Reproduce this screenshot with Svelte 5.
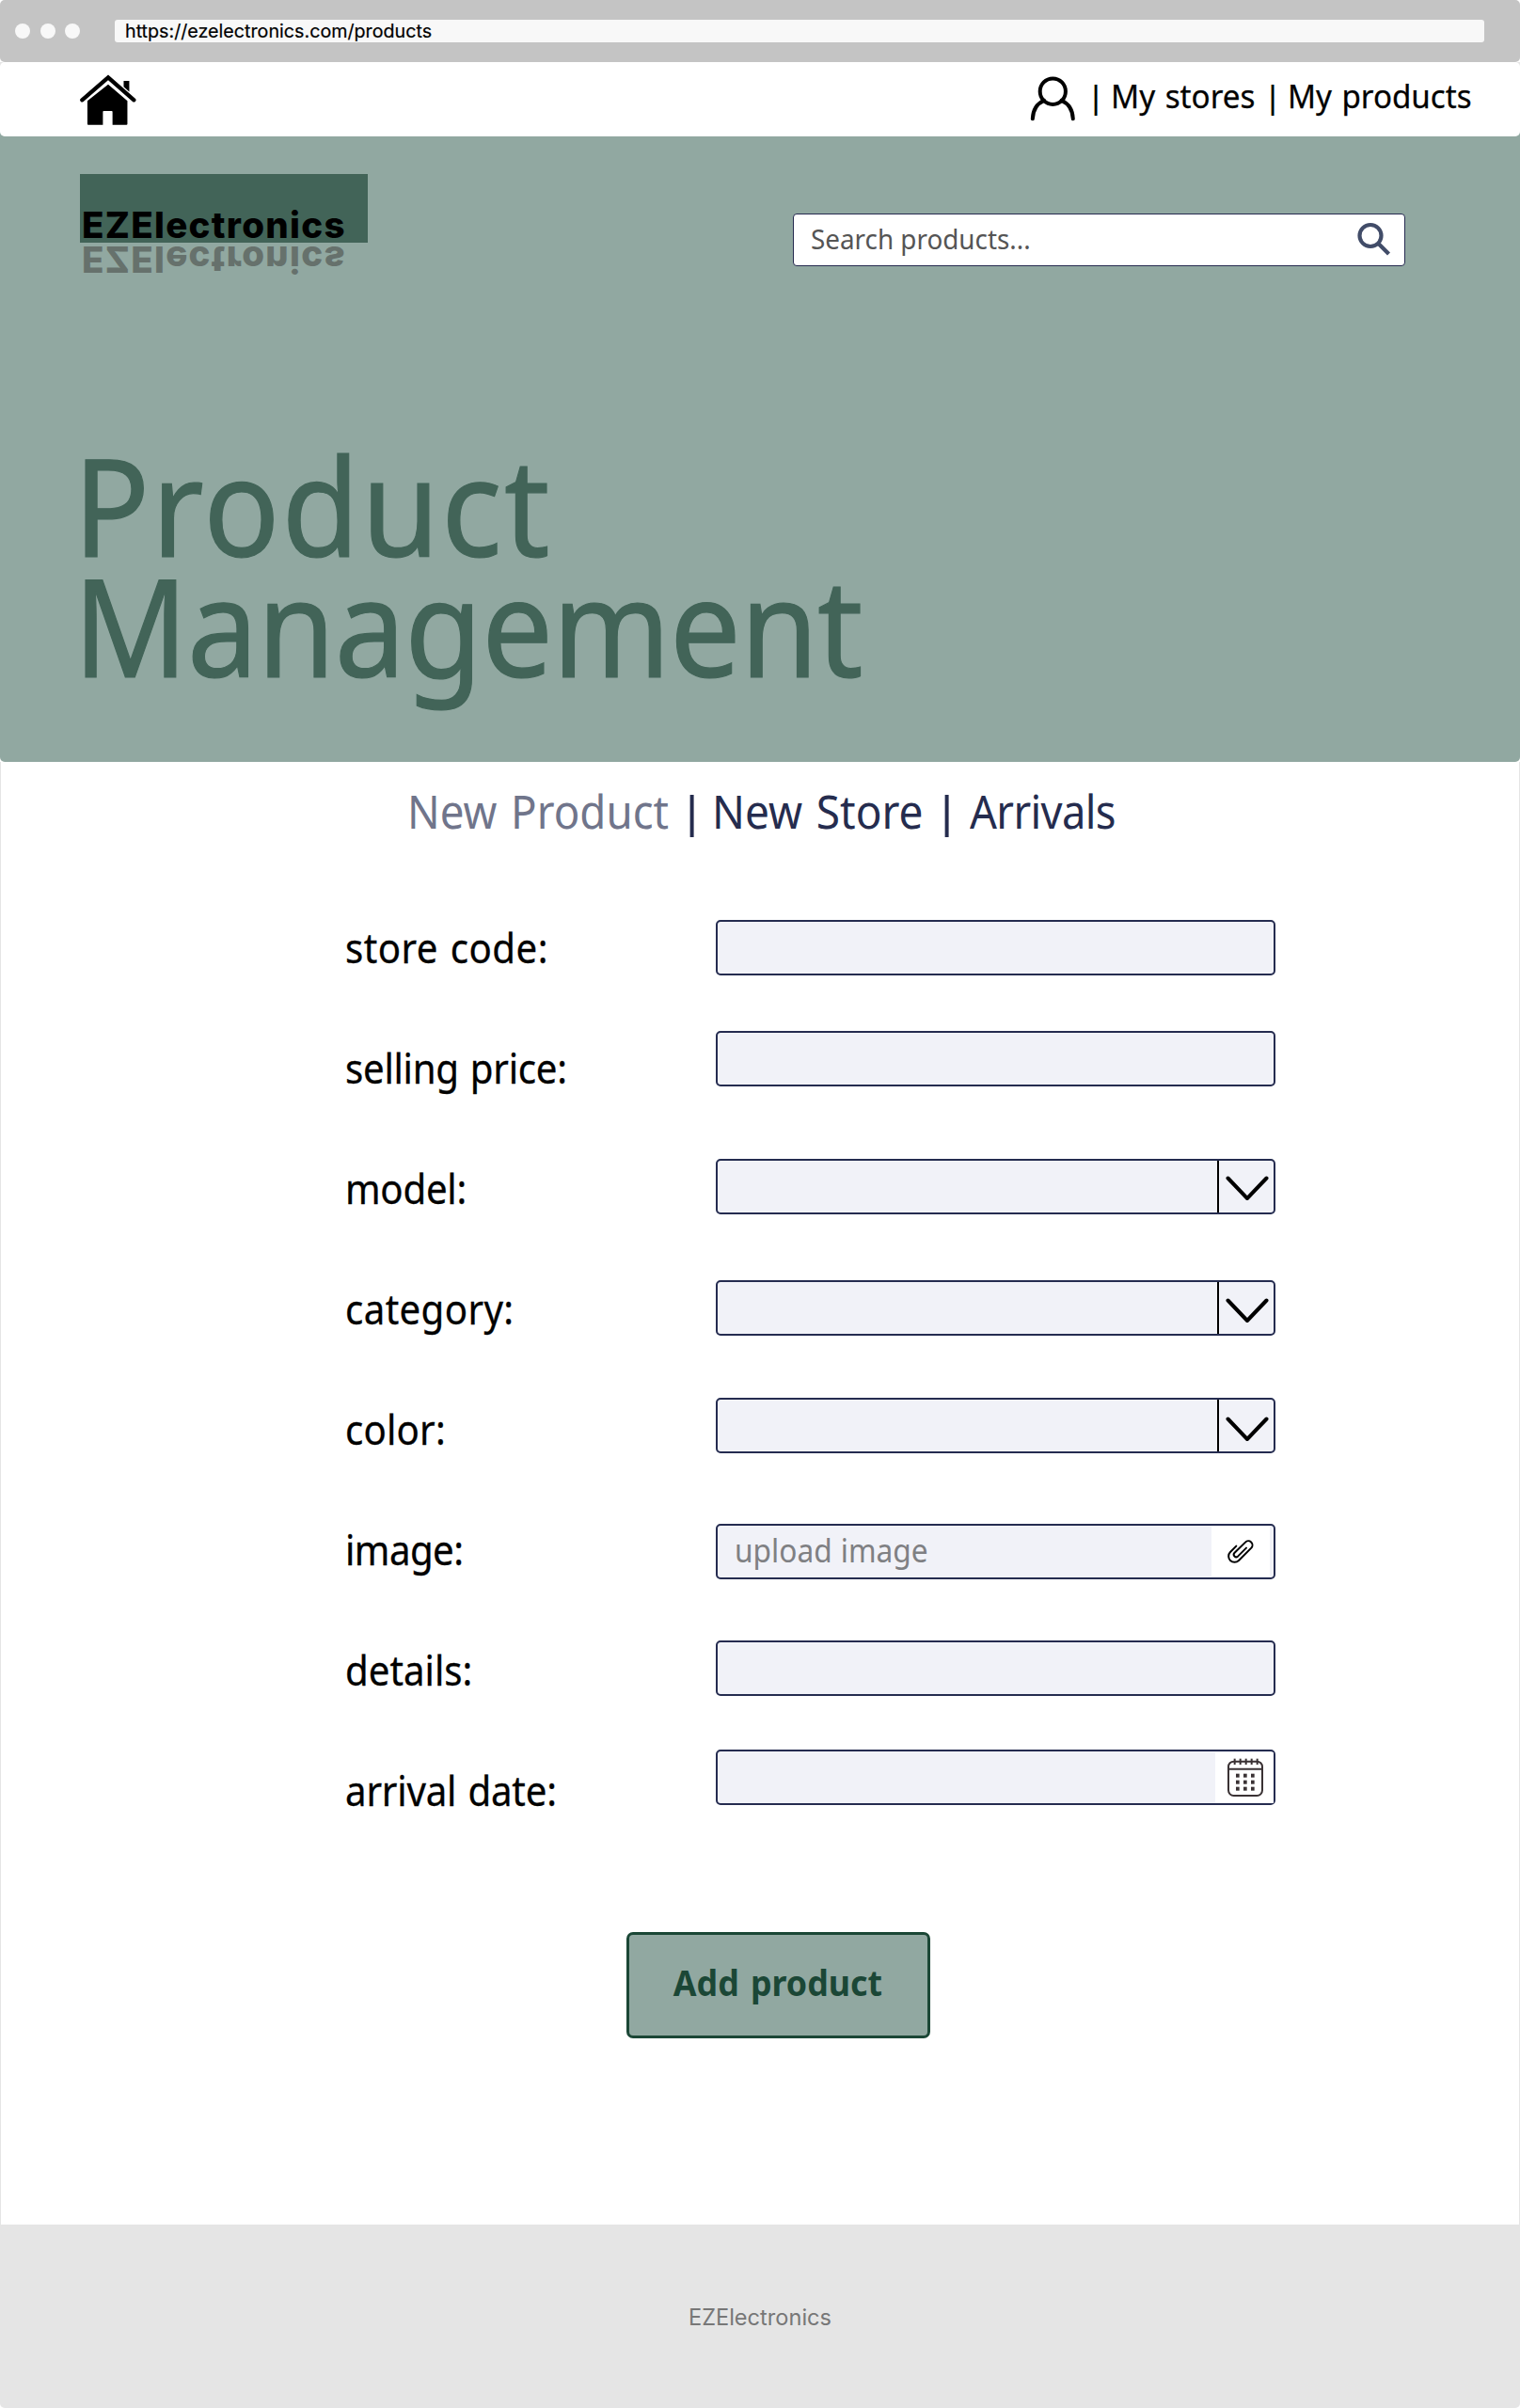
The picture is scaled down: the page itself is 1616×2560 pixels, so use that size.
<script>
  const fields = [
    { label: 'store code:', track: 0.5, kind: 'text' },
    { label: 'selling price:', track: -0.3, kind: 'text' },
    { label: 'model:', track: -0.3, kind: 'select' },
    { label: 'category:', track: 0.4, kind: 'select' },
    { label: 'color:', track: 0.2, kind: 'select' },
    { label: 'image:', track: -0.6, kind: 'file' },
    { label: 'details:', track: 0, kind: 'text' },
    { label: 'arrival date:', track: -0.2, kind: 'date' },
  ];
</script>

<div class="page">
  <div class="browser">
    <i class="dot"></i><i class="dot"></i><i class="dot"></i>
    <div class="url">https://ezelectronics.com/products</div>
  </div>

  <div class="nav-wrap">
    <nav class="nav">
      <svg class="home" viewBox="255 236 182 164" aria-label="Home">
        <path d="M396 256h18v35l-18-16z" />
        <path d="M346 268l62 53v74q0 3-3 3h-45v-42q0-3-3-3h-25q-3 0-3 3v42h-47q-3 0-3-3v-74z" />
        <path class="roof" d="M262 318l84-73 83 73" />
      </svg>
      <svg class="user" viewBox="0 0 49 50" aria-label="Account">
        <ellipse cx="24.3" cy="17.2" rx="13.6" ry="13.8" />
        <path d="M2.8 46.3C3.2 37 7.6 30 15 26.8M45.8 46.3C45.4 37 41 30 33.6 26.8" />
      </svg>
      <span class="bar">|</span>
      <a class="link stores"><span>My stores</span></a>
      <span class="bar second">|</span>
      <a class="link products"><span>My products</span></a>
    </nav>
  </div>

  <header class="hero">
    <div class="top">
      <div class="logo">
        <div class="mark">EZElectronics</div>
        <div class="reflection" aria-hidden="true">EZElectronics</div>
      </div>
      <div class="search">
        <span>Search products...</span>
        <svg viewBox="0 0 38 38">
          <circle cx="15" cy="14.5" r="11.5" />
          <path d="M23.5 23L34.5 34" />
        </svg>
      </div>
    </div>
    <h1><span class="l1">Product</span><span class="l2">Management</span></h1>
  </header>

  <main>
    <div class="tabs">
      <span class="tab muted">New Product</span>
      <span class="sep">|</span>
      <span class="tab">New Store</span>
      <span class="sep">|</span>
      <span class="tab last">Arrivals</span>
    </div>

    <div class="form">
      <div class="labels">
        {#each fields as f}
          <div class="label"><span style:letter-spacing="{f.track}px">{f.label}</span></div>
        {/each}
      </div>
      <div class="controls">
        {#each fields as f}
          <div class="control {f.kind}">
            {#if f.kind === 'select'}
              <div class="arrow">
                <svg viewBox="0 0 46 27"><path d="M2.5 2.5L23 24L43.5 2.5" /></svg>
              </div>
            {:else if f.kind === 'file'}
              <span class="placeholder">upload image</span>
              <div class="clip">
                <svg viewBox="105 110 84 76">
                  <path d="M133 130L114 149A19 19 0 0 0 141 176L181 136A13 13 0 0 0 162 118L127 152A7.8 7.8 0 0 0 138 163L165 136" />
                </svg>
              </div>
            {:else if f.kind === 'date'}
              <div class="cal">
                <svg viewBox="103 808 114 123">
                  <rect class="line" x="106" y="819" width="108" height="109" rx="17" />
                  <path class="line" d="M106 843H214" />
                  {#each [126, 144, 162, 180, 198] as x}
                    <path class="line" d="M{x} 810V829" />
                  {/each}
                  {#each [858, 879, 900] as y}
                    {#each [130, 154, 178] as x}
                      <rect {x} {y} width="11" height="12" />
                    {/each}
                  {/each}
                </svg>
              </div>
            {/if}
          </div>
        {/each}
      </div>
    </div>

    <button><span>Add product</span></button>
  </main>

  <footer>EZElectronics</footer>
</div>

<style>
  :global(body) { margin: 0; background: #fff; }
  .page { width: 1616px; height: 2560px; display: flex; flex-direction: column; overflow: hidden; font-family: "Noto Sans", sans-serif; color: #000; }
  .page * { box-sizing: border-box; }
  svg { display: block; flex: none; }

  .browser { height: 66px; flex: none; background: #c4c4c4; border-radius: 5px; display: flex; align-items: center; padding-left: 16px; }
  .dot { width: 16px; height: 16px; border-radius: 50%; background: #f8f8f8; margin-right: 10.5px; }
  .url { width: 1456px; height: 24px; margin-left: 26.5px; padding-left: 11px; border-radius: 3px; background: #f8f8f8; font: 400 19.7px/24px Inter, sans-serif; -webkit-text-stroke: 0.2px; white-space: nowrap; }

  .nav-wrap { height: 79px; flex: none; background: linear-gradient(#e5e5e5 50%, #91a8a1 50%); }
  .nav { height: 79px; background: #fff; border-radius: 5px; display: flex; align-items: flex-start; padding-left: 85px; }
  .home { width: 60px; height: 54.7px; margin-top: 12.7px; }
  .roof { fill: none; stroke: #000; stroke-width: 13; stroke-linecap: round; }
  .user { width: 49px; height: 50px; margin: 14px 0 0 950px; fill: none; stroke: #000; stroke-width: 4; stroke-linecap: round; }
  .bar, .link { font-size: 35px; line-height: 50px; margin-top: 11.2px; white-space: nowrap; }
  .bar { width: 32px; margin: 12.5px 0 0 5px; text-align: center; font-family: "Liberation Sans", sans-serif; }
  .bar.second { margin-left: 0; }
  .link span { display: inline-block; transform: scaleX(0.95); transform-origin: 0 50%; word-spacing: 2px; -webkit-text-stroke: 0.25px; }
  .stores { width: 156px; }
  .products span { transform: scaleX(0.947); }

  .hero { height: 665px; flex: none; background: #91a8a1; border-radius: 0 0 5px 5px; padding-top: 40px; }
  .top { height: 286.5px; display: flex; align-items: flex-start; padding-left: 85px; }
  .logo { width: 306px; font: 800 38.5px/39px Inter, sans-serif; letter-spacing: 1.3px; }
  .mark { height: 73px; padding: 34.5px 0 0 2px; background: #426458; }
  .reflection { margin-top: -2px; padding-left: 2px; transform: scaleY(-1); color: #66716c; }
  .search { width: 651px; height: 56px; margin: 42px 0 0 452px; border: 1px solid #252a4f; border-radius: 4px; background: #fff; display: flex; align-items: center; justify-content: space-between; padding: 0 13px 0 18px; }
  .search span { font-size: 29.3px; line-height: 54px; color: #555; transform: scaleX(0.95); transform-origin: 0 50%; white-space: nowrap; margin-top: -3px; }
  .search svg { width: 38px; height: 38px; fill: none; stroke: #414c68; stroke-width: 4.2; }
  h1 { margin: 0; padding-left: 78.3px; font-weight: 400; font-size: 144.5px; line-height: 128px; color: #426458; -webkit-text-stroke: 1.2px; }
  h1 span { display: block; width: max-content; transform: scaleX(0.93); transform-origin: 0 50%; }
  .l1 { letter-spacing: 2.2px; }
  .l2 { letter-spacing: -0.9px; }

  main { height: 1555px; flex: none; border: solid #e5e5e5; border-width: 0 1px; padding-top: 21.5px; }
  .tabs { display: flex; height: 60px; padding-left: 431.5px; font-size: 49px; line-height: 60px; color: #252c4e; white-space: nowrap; }
  .tab { width: 229px; word-spacing: 3px; transform: scaleX(0.938); transform-origin: 0 50%; }
  .tab.muted { width: 282px; color: #70758b; transform: scaleX(0.932); }
  .tab.last { margin-left: 3px; letter-spacing: -0.7px; transform: scaleX(0.925); }
  .sep { width: 42px; text-align: center; padding-top: 1.5px; font-family: "Liberation Sans", sans-serif; }

  .form { display: flex; height: 1162.5px; padding: 51.3px 0 0 366px; }
  .labels { width: 394px; }
  .label { height: 128px; font-size: 43.5px; line-height: 128px; word-spacing: 2px; white-space: nowrap; -webkit-text-stroke: 0.3px; }
  .label span { display: inline-block; transform: scaleX(0.925); transform-origin: 0 50%; }
  .controls { padding-top: 35.5px; }
  .control { width: 595px; height: 59px; border: 2px solid #252c50; border-radius: 5px; background: #f1f2f8; display: flex; justify-content: flex-end; margin-bottom: 59px; }
  .control:nth-child(2) { margin-bottom: 77px; }
  .control:nth-child(3) { margin-bottom: 70px; }
  .control:nth-child(4) { margin-bottom: 66px; }
  .control:nth-child(5) { margin-bottom: 75px; }
  .control:nth-child(6) { margin-bottom: 65px; }
  .control:nth-child(7) { margin-bottom: 57px; }
  .arrow { width: 60px; border-left: 2px solid #000; padding: 15.5px 0 0 7.3px; }
  .control:nth-child(4) .arrow { padding-top: 17px; }
  .control:nth-child(5) .arrow { padding-top: 18px; }
  .arrow svg { width: 46px; height: 27px; fill: none; stroke: #000; stroke-width: 4; stroke-linecap: round; stroke-linejoin: round; }
  .control.file { justify-content: space-between; }
  .placeholder { margin-left: 18px; font-size: 35px; line-height: 50px; color: #7f8083; word-spacing: 1px; white-space: nowrap; transform: scaleX(0.905); transform-origin: 0 50%; margin-top: 0.5px; }
  .clip { width: 62px; height: 54px; margin-right: 4px; background: #fff; padding: 15px 0 0 17px; }
  .clip svg { width: 28px; height: 25.3px; fill: none; stroke: #000; stroke-width: 6; stroke-linecap: round; }
  .cal { width: 62px; height: 54px; margin-top: 1px; background: #fff; padding: 6px 0 0 12.5px; }
  .cal svg { width: 38px; height: 41px; fill: #3a3234; }
  .cal .line { fill: none; stroke: #3a3234; stroke-width: 6; }

  button { display: block; width: 323px; height: 113px; margin: 0 0 0 664.5px; padding: 0 0 7px; border: 3px solid #1b4736; border-radius: 7px; background: #91a8a1; color: #1b4736; font: 700 38.3px/100px "Noto Sans", sans-serif; }
  button span { display: inline-block; transform: scaleX(0.935); word-spacing: 3px; white-space: nowrap; }

  footer { flex: 1; background: #e5e5e5; border-radius: 0 0 5px 5px; text-align: center; padding-top: 79px; font: 400 23.6px/40px Inter, sans-serif; color: #777; }
</style>
